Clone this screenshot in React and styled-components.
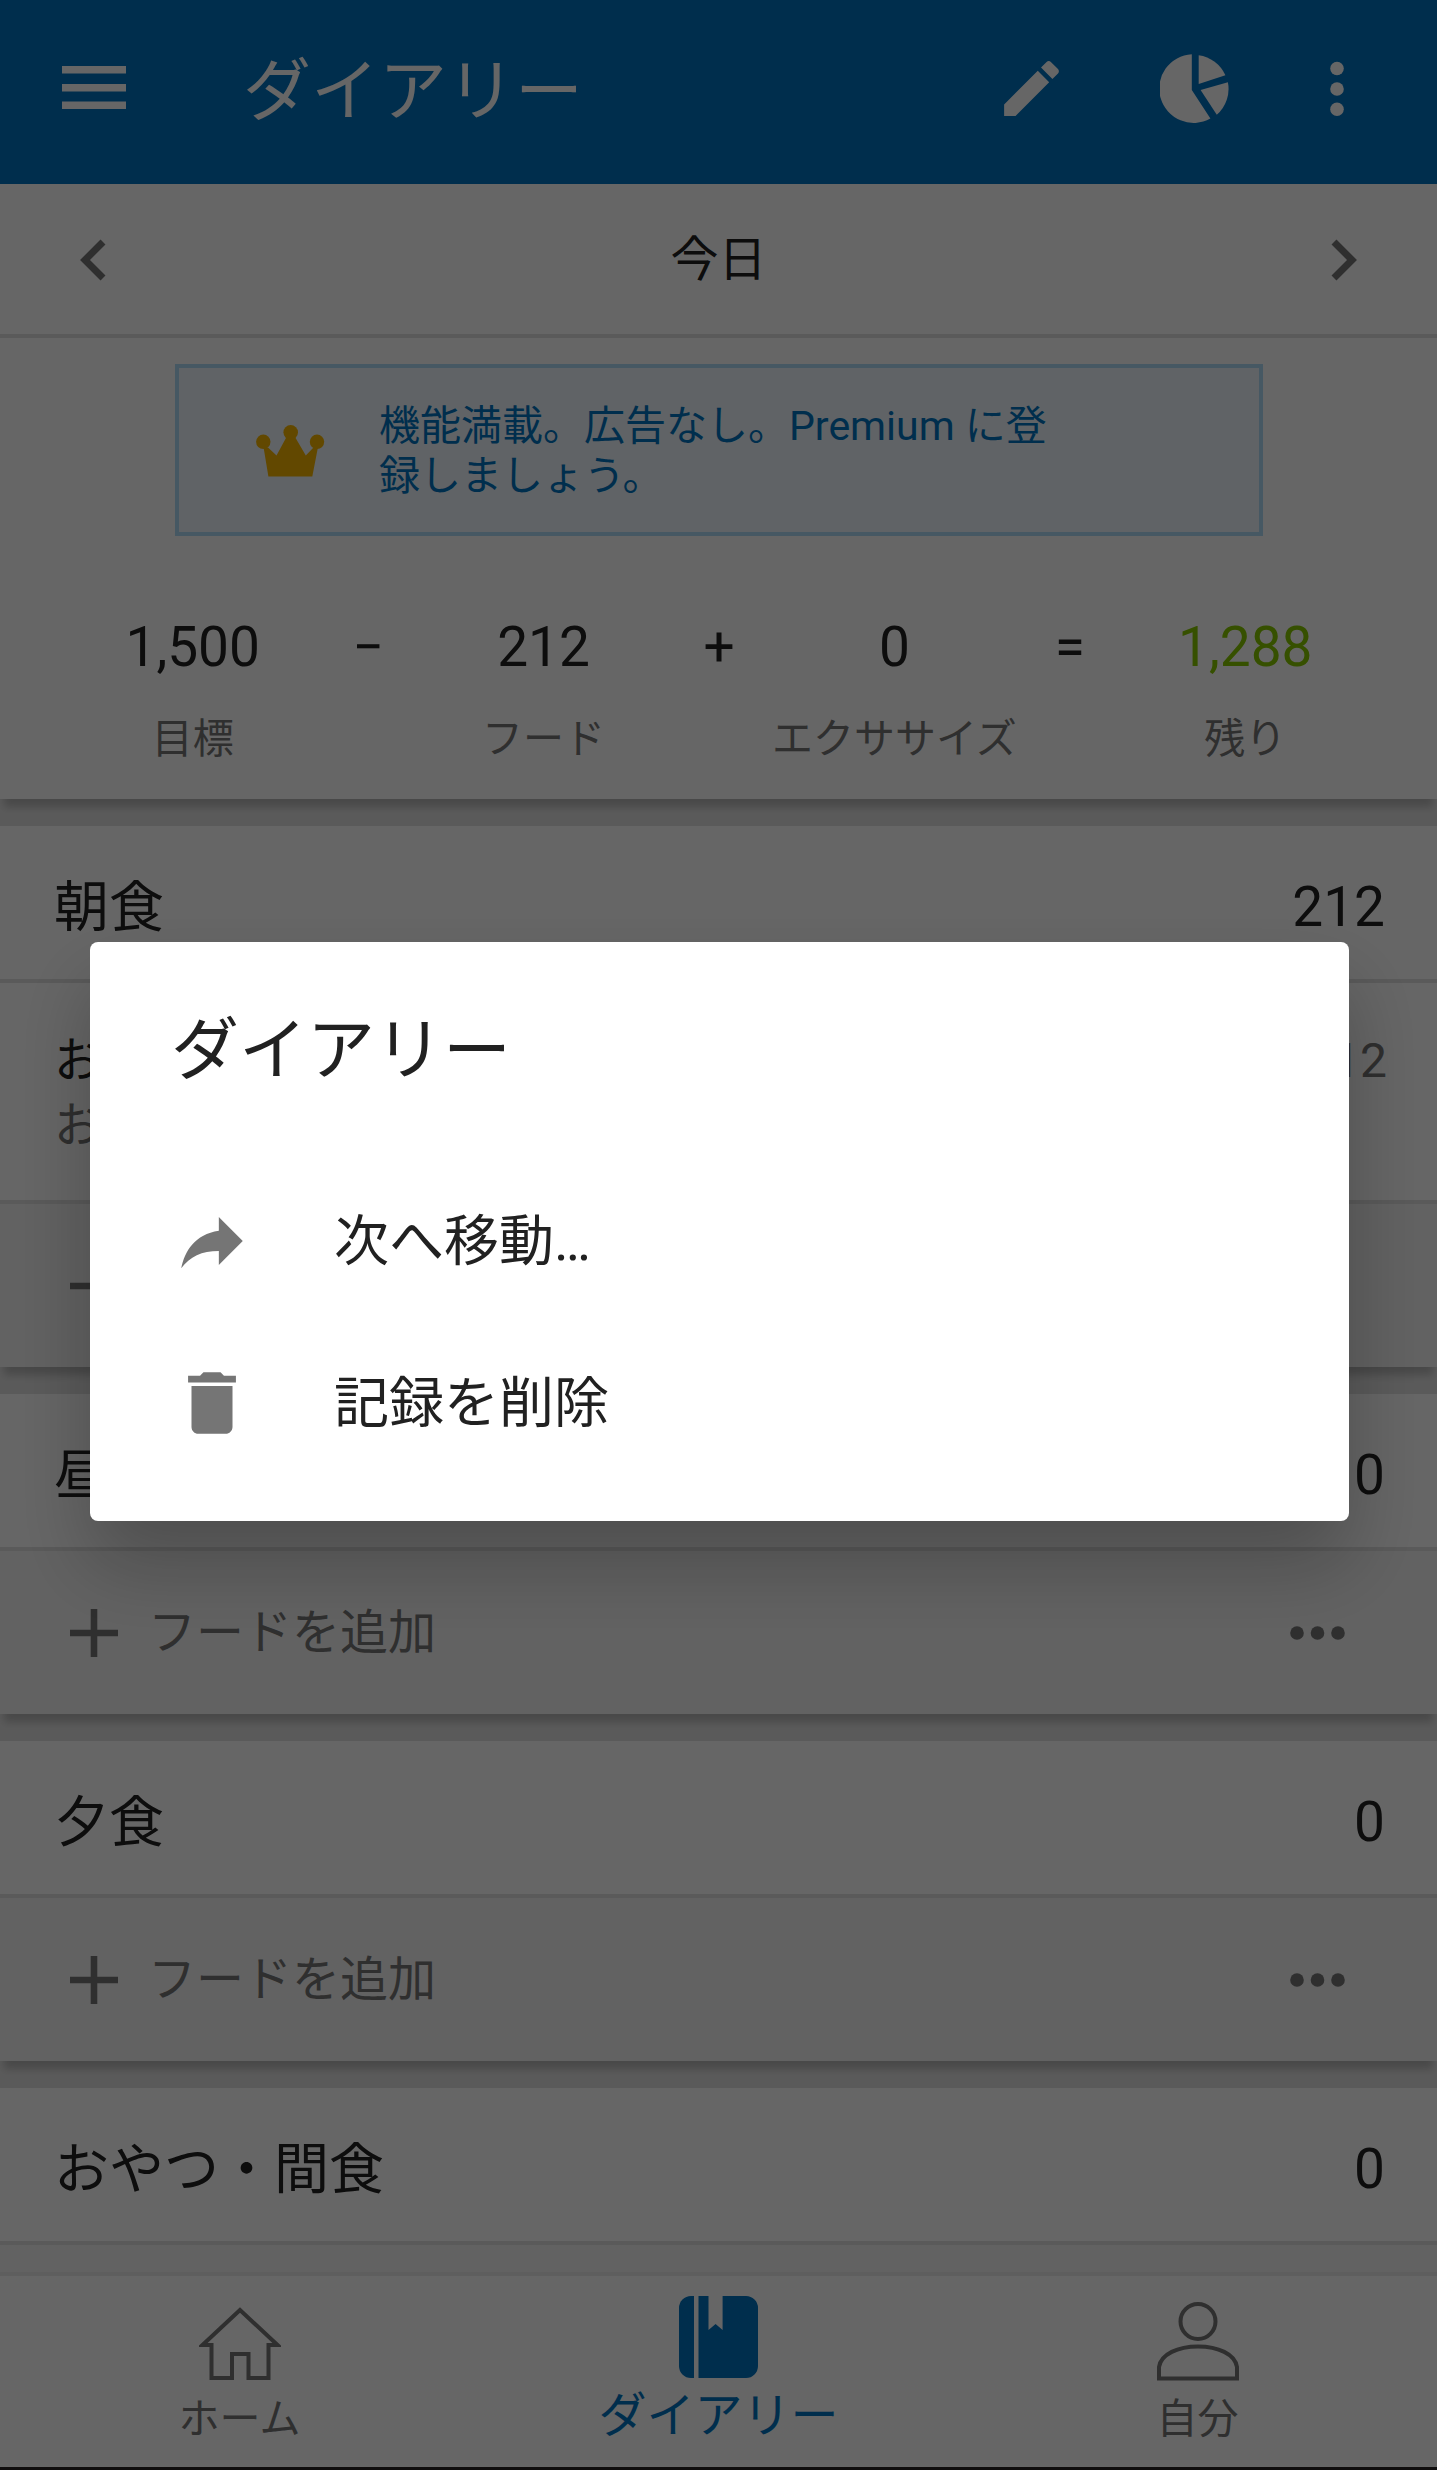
import React from "react";
import styled, { createGlobalStyle } from "styled-components";

const GlobalStyle = createGlobalStyle`
  * {
    box-sizing: border-box;
  }
  body {
    margin: 0;
    font-family: Roboto, "Noto Sans CJK JP", sans-serif;
    color: #212121;
  }
  button {
    padding: 0;
    border: none;
    background: none;
    font: inherit;
    color: inherit;
    text-align: left;
    cursor: pointer;
  }
  svg {
    display: block;
    flex: none;
  }
  h1, h2, p {
    margin: 0;
    font-weight: 400;
  }
`;

const Screen = styled.div`
  display: flex;
  flex-direction: column;
  height: 100vh;
  overflow: hidden;
  background: #e2e2e2;
`;

const Header = styled.header`
  display: flex;
  align-items: center;
  flex: none;
  height: 184px;
  padding: 0 93px 8px 62px;
  background: #0073c0;
  color: #ffffff;
`;

const HeaderTitle = styled.h1`
  flex: 1;
  margin-left: 117px;
  padding-top: 8px;
  font-size: 68px;
  line-height: 80px;
`;

const HeaderActions = styled.div`
  display: flex;
  align-items: center;
`;

const EditButton = styled.button`
  margin-right: 92px;
`;

const ChartButton = styled.button`
  margin-right: 101px;
`;

const Content = styled.main`
  flex: 1;
  min-height: 0;
  overflow: hidden;
`;

const Card = styled.section`
  margin-bottom: 27px;
  background: #ffffff;
  box-shadow: 0 12px 8px -4px rgba(0, 0, 0, 0.2);
`;

const DateBar = styled.div`
  display: flex;
  align-items: center;
  justify-content: space-between;
  height: 154px;
  padding: 2px 80px 0;
  border-bottom: 4px solid #e0e0e0;
  font-size: 48px;
  line-height: 56px;
`;

const PremiumBanner = styled.a`
  display: flex;
  align-items: center;
  gap: 54px;
  height: 172px;
  margin: 26px 174px 0 175px;
  padding: 2px 190px 0 77px;
  border: 4px solid #afdcf8;
  background: #eff8fe;
  color: #0073c0;
  font-size: 41px;
  line-height: 50px;
  text-decoration: none;
`;

const Totals = styled.div`
  display: grid;
  grid-template-columns: repeat(7, minmax(0, 1fr));
  padding: 79px 104px 28px 105px;
`;

const Figure = styled.div`
  display: flex;
  flex-direction: column;
  align-items: center;
  gap: 28px;
  white-space: nowrap;
`;

const Amount = styled.span`
  font-size: 55px;
  line-height: 64px;
  color: ${({ $remaining }) => ($remaining ? "#87c700" : "inherit")};
`;

const Caption = styled.span`
  font-size: 41px;
  line-height: 64px;
  color: #757575;
`;

const MealHeader = styled.div`
  display: flex;
  align-items: center;
  justify-content: space-between;
  height: 157px;
  padding: 8px 52px 0 54px;
  border-bottom: 4px solid #e0e0e0;
  font-size: 55px;
  line-height: 64px;
`;

const MealTitle = styled.h2`
  font-size: 55px;
`;

const FoodRow = styled.div`
  display: flex;
  justify-content: space-between;
  height: 221px;
  padding: 45px 50px 0 54px;
  border-bottom: 4px solid #e0e0e0;
  font-size: 48px;
  line-height: 65px;
`;

const Muted = styled.p`
  color: #757575;
`;

const AddRow = styled.div`
  display: flex;
  align-items: center;
  justify-content: space-between;
  height: 163px;
  padding: 0 92px 0 70px;
  background: #f5f5f5;
  color: #757575;
`;

const AddButton = styled.button`
  display: flex;
  align-items: center;
  gap: 30px;
  font-size: 48px;
  line-height: 64px;
`;

const NavBar = styled.nav`
  display: flex;
  flex: none;
  height: 194px;
  position: relative;
  background: #ffffff;
  border-bottom: 3px solid #282424;
  box-shadow: 0 -4px 0 rgba(0, 0, 0, 0.04);
`;

const NavLink = styled.a`
  display: flex;
  flex: 1;
  flex-direction: column;
  align-items: center;
  justify-content: flex-end;
  gap: 6px;
  padding-bottom: ${({ $active }) => ($active ? 19 : 16)}px;
  color: ${({ $active }) => ($active ? "#0073c0" : "#757575")};
  font-size: ${({ $active }) => ($active ? 48 : 41)}px;
  line-height: 64px;
  text-decoration: none;
`;

const Overlay = styled.div`
  position: fixed;
  inset: 0;
  display: flex;
  align-items: center;
  padding: 0 88px 8px 90px;
  background: rgba(0, 0, 0, 0.6);
`;

const Dialog = styled.div`
  flex: 1;
  padding: 69px 0 35px;
  border-radius: 8px;
  background: #ffffff;
  box-shadow: 0 42px 80px rgba(0, 0, 0, 0.25);
`;

const DialogTitle = styled.h2`
  margin: 0 81px 71px;
  font-size: 68px;
  line-height: 80px;
`;

const DialogItem = styled.button`
  display: flex;
  align-items: center;
  gap: 81px;
  width: 100%;
  height: 162px;
  padding: 0 81px 4px;
  font-size: 55px;
  line-height: 64px;

  svg {
    color: #757575;
  }
`;

const MenuIcon = () => (
  <svg width="64" height="44" viewBox="0 0 64 44" fill="currentColor">
    <path d="M0 0h64v7.5H0zM0 18h64v7.5H0zM0 35.5h64V43H0z" />
  </svg>
);

const PencilIcon = () => (
  <svg width="73" height="73" viewBox="0 0 24 24" fill="currentColor">
    <path d="M3 17.25V21h3.75L17.81 9.94l-3.75-3.75L3 17.25zM20.71 7.04c.39-.39.39-1.02 0-1.41l-2.34-2.34c-.39-.39-1.02-.39-1.41 0l-1.83 1.83 3.75 3.75 1.83-1.83z" />
  </svg>
);

const PieIcon = () => (
  <svg width="69" height="69" viewBox="0 0 69 69" fill="currentColor">
    <path d="M31.8 0.2V36L50.4 64.6A34.4 34.4 0 1 1 31.8 0.2z" />
    <path d="M38.7 1.2V30L65.4 21.3A34.4 34.4 0 0 0 38.7 1.2z" />
    <path d="M40.6 36L67.9 28.3A34.4 34.4 0 0 1 56.8 60.8z" />
  </svg>
);

const DotsIcon = ({ vertical }) =>
  vertical ? (
    <svg width="14" height="56" viewBox="0 0 14 56" fill="currentColor">
      <circle cx="7" cy="8.5" r="6.8" />
      <circle cx="7" cy="29" r="6.8" />
      <circle cx="7" cy="49.2" r="6.8" />
    </svg>
  ) : (
    <svg width="55" height="14" viewBox="0 0 55 14" fill="currentColor">
      <circle cx="7" cy="7" r="6.8" />
      <circle cx="27.5" cy="7" r="6.8" />
      <circle cx="48" cy="7" r="6.8" />
    </svg>
  );

const ChevronIcon = ({ right }) => (
  <svg
    width="26"
    height="42"
    viewBox="0 0 26 42"
    fill="none"
    stroke="#757575"
    strokeWidth="7"
  >
    <path d={right ? "M3 3L21 21L3 39" : "M23 3L5 21L23 39"} />
  </svg>
);

const CrownIcon = () => (
  <svg width="69" height="52" viewBox="0 0 69 52" fill="#f5b400">
    <circle cx="34.7" cy="7.3" r="7.3" />
    <circle cx="7.3" cy="16.8" r="7.2" />
    <circle cx="61" cy="16.8" r="7.2" />
    <path d="M12.4 51.5L7.5 22L12 22.5L20.5 30.5L30.5 12H39L49.8 30.5L57.5 22.5L62 22L56.3 51.5z" />
  </svg>
);

const PlusIcon = () => (
  <svg width="48" height="48" viewBox="0 0 48 48" fill="currentColor">
    <path d="M20.7 0h6.6v20.7H48v6.6H27.3V48h-6.6V27.3H0v-6.6h20.7z" />
  </svg>
);

const HomeIcon = () => (
  <svg
    width="82"
    height="74"
    viewBox="0 0 82 74"
    fill="none"
    stroke="currentColor"
    strokeWidth="4"
  >
    <path d="M41 3L3.5 38H12.5V71H33V47H49.5V71H69.5V38H78.5z" />
  </svg>
);

const DiaryIcon = () => (
  <svg width="80" height="82" viewBox="0 0 80 82" fill="currentColor">
    <path d="M15 0V82H12A12 12 0 0 1 0 70V12A12 12 0 0 1 12 0z" />
    <path d="M19.5 0H29.5V34L36.6 28L43.6 34V0H67A12 12 0 0 1 79 12V70A12 12 0 0 1 67 82H19.5z" />
  </svg>
);

const PersonIcon = () => (
  <svg
    width="82"
    height="79"
    viewBox="0 0 82 79"
    fill="none"
    stroke="currentColor"
    strokeWidth="4"
  >
    <circle cx="41" cy="19.5" r="17.5" />
    <path d="M2 76.5V65C4 52 21 44.5 41 44.5S78 52 80 65V76.5z" />
  </svg>
);

const ForwardIcon = () => (
  <svg width="82" height="82" viewBox="0 0 24 24" fill="currentColor">
    <path d="M14 9V5l7 7-7 7v-4.1c-5 0-8.5 1.6-11 5.1 1-5 4-10 11-11z" />
  </svg>
);

const TrashIcon = () => (
  <svg width="82" height="82" viewBox="0 0 24 24" fill="currentColor">
    <path d="M6 19c0 1.1.9 2 2 2h8c1.1 0 2-.9 2-2V7H6v12zM19 4h-3.5l-1-1h-5l-1 1H5v2h14V4z" />
  </svg>
);

const totals = [
  { value: "1,500", label: "目標" },
  { value: "−" },
  { value: "212", label: "フード" },
  { value: "+" },
  { value: "0", label: "エクササイズ" },
  { value: "=" },
  { value: "1,288", label: "残り", remaining: true },
];

const meals = [
  {
    name: "朝食",
    calories: 212,
    foods: [{ name: "お茶", detail: "お茶", calories: 212 }],
  },
  { name: "昼食", calories: 0, foods: [], addLabel: "フードを追加" },
  { name: "夕食", calories: 0, foods: [], addLabel: "フードを追加" },
  { name: "おやつ・間食", calories: 0, foods: [] },
];

const Meal = ({ name, calories, foods, addLabel }) => (
  <Card>
    <MealHeader>
      <MealTitle>{name}</MealTitle>
      <span>{calories}</span>
    </MealHeader>
    {foods.map((food) => (
      <FoodRow key={food.name}>
        <div>
          <p>{food.name}</p>
          <Muted>{food.detail}</Muted>
        </div>
        <Muted>{food.calories}</Muted>
      </FoodRow>
    ))}
    <AddRow>
      <AddButton type="button" aria-label={`${name}に追加`}>
        <PlusIcon />
        {addLabel}
      </AddButton>
      <button type="button" aria-label="その他">
        <DotsIcon />
      </button>
    </AddRow>
  </Card>
);

const App = () => (
  <>
    <GlobalStyle />
    <Screen>
      <Header>
        <button type="button" aria-label="メニュー">
          <MenuIcon />
        </button>
        <HeaderTitle>ダイアリー</HeaderTitle>
        <HeaderActions>
          <EditButton type="button" aria-label="編集">
            <PencilIcon />
          </EditButton>
          <ChartButton type="button" aria-label="栄養">
            <PieIcon />
          </ChartButton>
          <button type="button" aria-label="その他">
            <DotsIcon vertical />
          </button>
        </HeaderActions>
      </Header>
      <Content>
        <Card>
          <DateBar>
            <button type="button" aria-label="前の日">
              <ChevronIcon />
            </button>
            <span>今日</span>
            <button type="button" aria-label="次の日">
              <ChevronIcon right />
            </button>
          </DateBar>
          <PremiumBanner href="#premium">
            <CrownIcon />
            <span>機能満載。広告なし。Premium に登録しましょう。</span>
          </PremiumBanner>
          <Totals>
            {totals.map(({ value, label, remaining }) => (
              <Figure key={value}>
                <Amount $remaining={remaining}>{value}</Amount>
                {label && <Caption>{label}</Caption>}
              </Figure>
            ))}
          </Totals>
        </Card>
        {meals.map((meal) => (
          <Meal key={meal.name} {...meal} />
        ))}
      </Content>
      <NavBar>
        <NavLink href="#home">
          <HomeIcon />
          ホーム
        </NavLink>
        <NavLink href="#diary" $active>
          <DiaryIcon />
          ダイアリー
        </NavLink>
        <NavLink href="#me">
          <PersonIcon />
          自分
        </NavLink>
      </NavBar>
    </Screen>
    <Overlay>
      <Dialog role="dialog" aria-modal="true" aria-labelledby="dialog-title">
        <DialogTitle id="dialog-title">ダイアリー</DialogTitle>
        <DialogItem type="button">
          <ForwardIcon />
          次へ移動…
        </DialogItem>
        <DialogItem type="button">
          <TrashIcon />
          記録を削除
        </DialogItem>
      </Dialog>
    </Overlay>
  </>
);

export default App;
